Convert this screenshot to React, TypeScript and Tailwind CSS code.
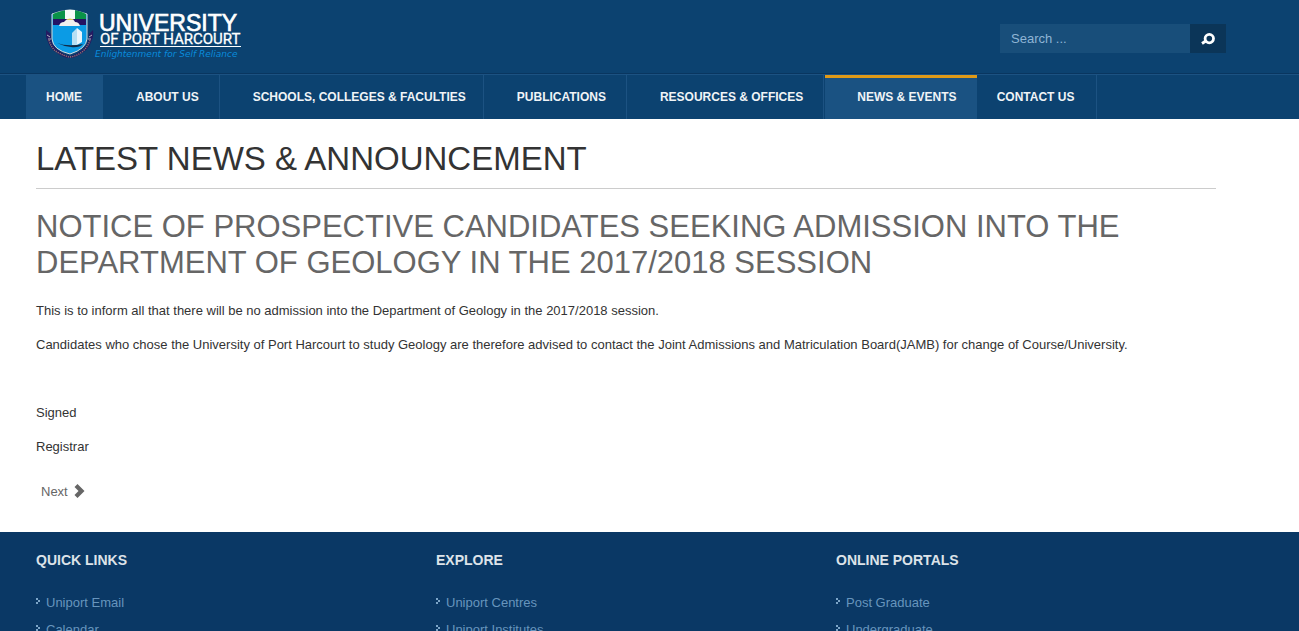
const navItems = [
  { label: 'HOME', className: 'min-w-[77px] bg-[#1a5282] px-5' },
  { label: 'ABOUT US', className: 'border-r border-[#1c5282] pl-[33px] pr-5' },
  { label: 'SCHOOLS, COLLEGES & FACULTIES', className: 'border-r border-[#1c5282] pl-[33px] pr-[17px]' },
  { label: 'PUBLICATIONS', className: 'border-r border-[#1c5282] pl-[33px] pr-5' },
  { label: 'RESOURCES & OFFICES', className: 'border-r border-[#1c5282] pl-[33px] pr-5' },
  { label: 'NEWS & EVENTS', className: 'ml-px bg-[#1a5282] pl-8 pr-5 shadow-[inset_0_3px_0_#e09a18]' },
  { label: 'CONTACT US', className: 'min-w-[120px] border-r border-[#1c5282] px-5' },
]

const footerColumns = [
  { title: 'QUICK LINKS', links: ['Uniport Email', 'Calendar'] },
  { title: 'EXPLORE', links: ['Uniport Centres', 'Uniport Institutes'] },
  { title: 'ONLINE PORTALS', links: ['Post Graduate', 'Undergraduate'] },
]

function Logo() {
  return (
    <svg width="200" height="56" viewBox="0 0 200 56" role="img" aria-label="University of Port Harcourt">
      {/* motto ribbon */}
      <path d="M0 22 l5 4 v4 q1 8 7 12 q6 5 12 6 q6 -1 12 -6 q6 -5 7 -12 v-4 l4 -4 q1 7 -2 12 q-3 8 -9 11 q-6 5 -12 5 q-7 0 -13 -5 q-7 -4 -9 -11 q-3 -5 -2 -12z" fill="#241b62" />
      <path d="M3 32 q2 8 8 12 q7 4 13 5 q7 -1 12 -5 q6 -5 8 -12" fill="none" stroke="#927a70" strokeWidth="1.4" strokeDasharray="1.2 1" />
      <path d="M1 27 l3 2 M2 31 l3 0 M46 27 l-3 2 M45 31 l-3 0" stroke="#d9d5d5" strokeWidth="0.8" />
      {/* shield */}
      <path d="M6 6 q17 -7 35 0 v25 q-1 10 -17 15 q-17 -4 -18 -15z" fill="#0b9be5" stroke="#d5dadd" strokeWidth="1" />
      <path d="M7 6 q9 -4 17 -4 q9 0 16 4 v5 h-33z" fill="#0a9347" />
      <path d="M19 2 q5 -1 10 0 v9 h-10z" fill="#f5faf6" />
      <path d="M7 11 h33 v6 h-33z" fill="#241463" />
      <path d="M13 18 q1 -4 5 -4 q2 -3 6 -3 t5 3 q4 0 5 4z" fill="#f1f1ee" />
      <path d="M20 12 q4 -3 8 0z" fill="#e3c75a" />
      <path d="M26 25 l5 -5 v18 l-5 -1z" fill="#b5dff4" />
      <path d="M31 20 l5 4 v10 l-5 3z" fill="#e8f5fc" />
      <path d="M11 35 q10 4 26 1 q-4 4 -12 3 q-8 -1 -14 -4z" fill="#102b47" />
      <g fill="#fff">
        <text x="53" y="23" fontSize="23" fontFamily="Liberation Sans, Arial, sans-serif" stroke="#fff" strokeWidth="0.7">UNIVERSITY</text>
        <text x="54" y="36" fontSize="15" fontFamily="Roboto, sans-serif" stroke="#fff" strokeWidth="0.3">OF PORT HARCOURT</text>
        <path d="M54 38h141v1h-141z" />
        <text x="49" y="49" fontSize="9" fontFamily="DejaVu Sans, sans-serif" fontStyle="italic" fill="#098bdb">Enlightenment for Self Reliance</text>
      </g>
    </svg>
  )
}

function Header() {
  return (
    <header className="bg-[#0c4270]">
      <div className="border-b border-[#093660]">
        <div className="ml-[26px] flex h-[73px] max-w-[1200px] items-start justify-between">
          <a href="#" className="ml-5 mt-2">
            <Logo />
          </a>
          <form className="mt-6 flex h-[29px]" onSubmit={(e) => e.preventDefault()}>
            <input
              type="search"
              aria-label="Search"
              placeholder="Search ..."
              className="w-[190px] bg-[#184e7a] px-[11px] text-[13px] text-white outline-none placeholder:text-[#8fb5d5]"
            />
            <button type="submit" aria-label="Submit search" className="flex w-9 items-center justify-center bg-[#0b3558]">
              <svg width="14" height="12" viewBox="0 0 14 12" fill="none" stroke="#fff">
                <circle cx="8.3" cy="5.6" r="4.2" strokeWidth="2.8" />
                <path d="M5.5 7.5 L1 10.5" strokeWidth="3" />
              </svg>
            </button>
          </form>
        </div>
      </div>
      <nav className="border-t border-[#1c5282]">
        <ul className="ml-[26px] flex h-11 max-w-[1200px]">
          {navItems.map((item) => (
            <li key={item.label} className="flex">
              <a href="#" className={`flex items-center whitespace-nowrap text-xs font-bold text-[#f0f4f7] ${item.className}`}>
                {item.label}
              </a>
            </li>
          ))}
        </ul>
      </nav>
    </header>
  )
}

function Article() {
  return (
    <main className="ml-[26px] max-w-[1200px] px-[10px] pb-8 pt-5 text-[13px] leading-[17px] text-[#333]">
      <h1 className="border-b border-[#ccc] pb-[10px] text-[33px] leading-[39px]">
        LATEST NEWS &amp; ANNOUNCEMENT
      </h1>
      <h2 className="mt-5 text-[31px] leading-9 text-[#666]">
        NOTICE OF PROSPECTIVE CANDIDATES SEEKING ADMISSION INTO THE DEPARTMENT OF GEOLOGY IN THE 2017/2018 SESSION
      </h2>
      <div className="mt-[21px] space-y-[17px]">
        <p>This is to inform all that there will be no admission into the Department of Geology in the 2017/2018 session.</p>
        <p>
          Candidates who chose the University of Port Harcourt to study Geology are therefore advised to contact the Joint
          Admissions and Matriculation Board(JAMB) for change of Course/University.
        </p>
        <p>&nbsp;</p>
        <p>Signed</p>
        <p>Registrar</p>
      </div>
      <a href="#" className="ml-[5px] mt-7 flex items-center gap-[6px] text-[#666]">
        Next
        <svg width="11" height="14" viewBox="0 0 11 14" fill="#666" className="mb-[2px]">
          <path d="M3.5 0 L10.5 7 L3.5 14 L0.5 11 L4.5 7 L0.5 3z" />
        </svg>
      </a>
    </main>
  )
}

function Footer() {
  return (
    <footer className="bg-[#0a3865] pb-8 pt-5">
      <div className="ml-[26px] grid max-w-[1200px] grid-cols-3">
        {footerColumns.map((column) => (
          <section key={column.title} className="px-[10px]">
            <h3 className="text-sm leading-[17px] font-bold text-[#dde3e9]">{column.title}</h3>
            <ul className="mt-5">
              {column.links.map((link) => (
                <li key={link} className="flex h-[27px] items-center gap-[6px] text-[13px] text-[#6795bd]">
                  <svg width="4" height="6" viewBox="0 0 4 6" fill="#7da6c9" className="mb-1" shapeRendering="crispEdges">
                    <path d="M0 0h2v2h-2z M2 2h2v2h-2z M0 4h2v2h-2z" />
                  </svg>
                  <a href="#">{link}</a>
                </li>
              ))}
            </ul>
          </section>
        ))}
      </div>
    </footer>
  )
}

export default function App() {
  return (
    <div className="h-screen overflow-hidden bg-white font-['Liberation_Sans',Arial,sans-serif]">
      <Header />
      <Article />
      <Footer />
    </div>
  )
}
